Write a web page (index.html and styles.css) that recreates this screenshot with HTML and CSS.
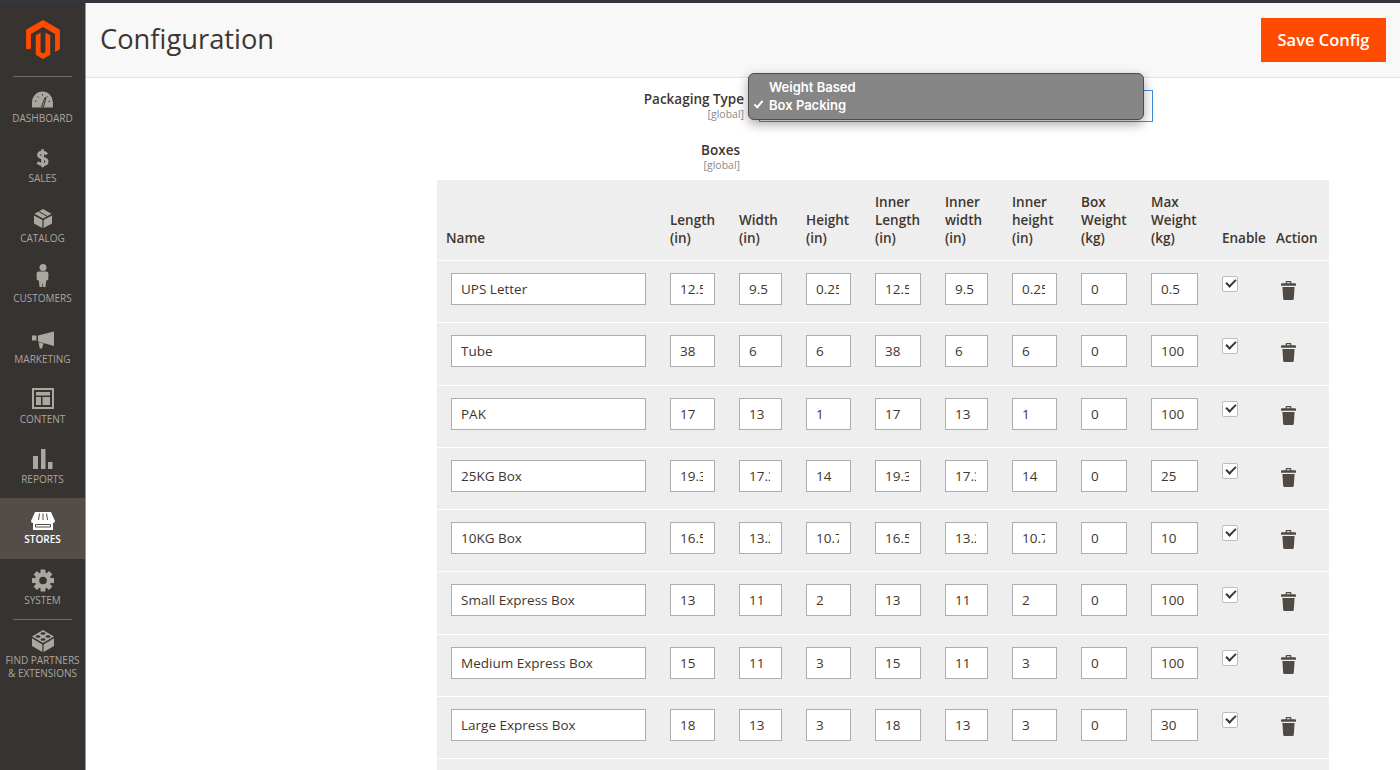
FILE: index.html
```html
<!DOCTYPE html>
<html lang="en">
<head>
    <meta charset="UTF-8">
    <meta name="viewport" content="width=device-width, initial-scale=1.0">
    <title>Configuration</title>
    <link rel="stylesheet" href="styles.css">
</head>
<body>
    <svg class="sprites" width="0" height="0">
        <symbol id="trash" viewBox="0 0 15 19">
            <path d="M4.6 2.2V1q0-1 1-1h3.800q1 0 1 1v1.200H14q1 0 1 1v1.600H0V3.200q0-1 1-1zM5.800 2.200h3.400V1.200H5.800z"/>
            <path d="M1.400 6h12.200l-.8 11.800q-.1 1.200-1.200 1.200H3.400q-1.100 0-1.200-1.200z"/>
        </symbol>
    </svg>

    <div class="topline"></div>
    <div class="layout">
        <nav class="sidebar">
            <div class="logo">
                <svg width="34" height="39" viewBox="1.6 0 20.8 24"><path d="M12 24l-4.455-2.572v-12l2.97-1.715v12.001l1.485.902 1.485-.902V7.713l2.97 1.715v12L12 24zM22.391 6v12l-2.969 1.714V8.572L12 4.286 4.574 8.572v9.143L1.609 18V6L12 0l10.391 6z"/></svg>
            </div>
            <a class="nav-item">
                <svg class="nav-icon" viewBox="0 0 26 26">
                    <path d="M2 21.500v-5a10.500 11 0 0 1 21 0v5z"/>
                    <path class="cut" d="M11.500 20.500l3.500-9 .8.3-2.200 9.200zM5 15l1.500.5M7.500 10.500l1.200 1M12.500 8v1.500M17.500 10.500l-1.200 1M20 15l-1.500.5"/>
                </svg>
                <span>Dashboard</span>
            </a>
            <a class="nav-item">
                <svg class="nav-icon" viewBox="0 0 26 26">
                    <path d="M11.200 3.200H14v18h-2.800z"/>
                    <path class="line" d="M17 8.200C15.500 6.700 14 6.200 12.500 6.200 10 6.200 8.600 7.400 8.600 9.100 8.600 13.500 17 11 17 15.400 17 17.300 15.300 18.400 12.800 18.400 10.800 18.400 9 17.900 7.500 16.400"/>
                </svg>
                <span>Sales</span>
            </a>
            <a class="nav-item">
                <svg class="nav-icon" viewBox="0 0 26 26">
                    <path d="M4.500 7.800L13 3l8.500 4.800L13 12.500z"/>
                    <path d="M4 9.400l8.400 4.700V22L4 17.400zM22 9.400l-8.400 4.700V22L22 17.400z"/>
                    <path class="cut" d="M8.500 5.400l8.500 4.800"/>
                </svg>
                <span>Catalog</span>
            </a>
            <a class="nav-item">
                <svg class="nav-icon" viewBox="0 0 26 26">
                    <circle cx="13" cy="1.500" r="3.500"/>
                    <path d="M9.500 5.500h7q2 0 2 2.500l-.3 6-2 .5-.7 6.500h-2.500l-.5-5-.5 5H9.500l-.7-6.500-2-.5-.3-6q0-2.500 2-2.500z"/>
                </svg>
                <span>Customers</span>
            </a>
            <a class="nav-item">
                <svg class="nav-icon" viewBox="0 0 26 26">
                    <path d="M8 8.500L24 4.500V19L8 14.500zM2 8.500h4.500v5H2zM8.500 15.200l5 1.400-1.500 4.900H9.800z"/>
                </svg>
                <span>Marketing</span>
            </a>
            <a class="nav-item">
                <svg class="nav-icon" viewBox="0 0 26 26">
                    <path fill-rule="evenodd" d="M2 1h22v21H2zM4 3v17h18V3z"/>
                    <path d="M6 5h14v3.500H6zM6 10h5v8H6zM12.500 10H20v8h-7.500z"/>
                </svg>
                <span>Content</span>
            </a>
            <a class="nav-item">
                <svg class="nav-icon" viewBox="0 0 26 26">
                    <path d="M3 9h5v13H3zM11 2h4.500v20H11zM18 15h4.500v7H18z"/>
                </svg>
                <span>Reports</span>
            </a>
            <a class="nav-item active">
                <svg class="nav-icon" viewBox="0 0 26 26">
                    <path d="M5 5h16l4 9q0 2-2 2v7H3v-7q-2 0-2-2z"/>
                    <path class="cut" d="M9.500 6.500L8.500 13M13 6.500V13M16.500 6.500l1 6.500M5.500 17.500h15v2.500h-15z"/>
                </svg>
                <span>Stores</span>
            </a>
            <a class="nav-item">
                <svg class="nav-icon" viewBox="0 0 26 26">
                    <rect x="10.500" y="1.500" width="5" height="22" rx=".5"/>
                    <rect x="10.500" y="1.500" width="5" height="22" rx=".5" transform="rotate(45 13 12.500)"/>
                    <rect x="10.500" y="1.500" width="5" height="22" rx=".5" transform="rotate(90 13 12.500)"/>
                    <rect x="10.500" y="1.500" width="5" height="22" rx=".5" transform="rotate(135 13 12.500)"/>
                    <circle cx="13" cy="12.500" r="8"/>
                    <circle class="hole" cx="13" cy="12.500" r="3.800"/>
                </svg>
                <span>System</span>
            </a>
            <div class="nav-line"></div>
            <a class="nav-item partners">
                <svg class="nav-icon" viewBox="0 0 26 26">
                    <path d="M13 0l11 6.500L13 13 2 6.500z"/>
                    <path d="M2 8.200l10.400 6.200V22L2 16zM24 8.200l-10.400 6.200V22L24 16z"/>
                    <ellipse class="hole" cx="13" cy="3.500" rx="2.500" ry="1.300"/>
                    <ellipse class="hole" cx="8" cy="6.500" rx="2.500" ry="1.300"/>
                    <ellipse class="hole" cx="18" cy="6.500" rx="2.500" ry="1.300"/>
                    <ellipse class="hole" cx="13" cy="9.500" rx="2.500" ry="1.300"/>
                </svg>
                <span>Find Partners<br>&amp; Extensions</span>
            </a>
        </nav>

        <div class="page">
            <header class="page-header">
                <h1>Configuration</h1>
                <button class="save-btn">Save Config</button>
            </header>

            <main class="config">
                <div class="field">
                    <div class="field-label">
                        <strong>Packaging Type</strong>
                        <small>[global]</small>
                    </div>
                    <div class="select-box">
                        <div class="select-menu">
                            <div class="select-option">Weight Based</div>
                            <div class="select-option checked">Box Packing</div>
                        </div>
                    </div>
                </div>

                <div class="field-label boxes-label">
                    <strong>Boxes</strong>
                    <small>[global]</small>
                </div>

                <table class="boxes">
                    <colgroup>
                        <col class="c-name"><col class="c-len"><col class="c-wid"><col class="c-hei">
                        <col class="c-ilen"><col class="c-iwid"><col class="c-ihei"><col class="c-bw">
                        <col class="c-mw"><col class="c-en"><col class="c-act">
                    </colgroup>
                    <thead>
                        <tr>
                            <th class="name-col">Name</th>
                            <th>Length (in)</th>
                            <th>Width (in)</th>
                            <th>Height (in)</th>
                            <th>Inner Length (in)</th>
                            <th>Inner width (in)</th>
                            <th>Inner height (in)</th>
                            <th>Box Weight (kg)</th>
                            <th>Max Weight (kg)</th>
                            <th>Enable</th>
                            <th>Action</th>
                        </tr>
                    </thead>
                    <tbody>
                        <tr>
                            <td class="name-col"><input type="text" value="UPS Letter"></td>
                            <td><input type="text" value="12.5"></td>
                            <td><input type="text" value="9.5"></td>
                            <td><input type="text" value="0.25"></td>
                            <td><input type="text" value="12.5"></td>
                            <td><input type="text" value="9.5"></td>
                            <td><input type="text" value="0.25"></td>
                            <td><input type="text" value="0"></td>
                            <td><input type="text" value="0.5"></td>
                            <td><input type="checkbox" checked></td>
                            <td><svg class="trash"><use href="#trash"/></svg></td>
                        </tr>
                        <tr>
                            <td class="name-col"><input type="text" value="Tube"></td>
                            <td><input type="text" value="38"></td>
                            <td><input type="text" value="6"></td>
                            <td><input type="text" value="6"></td>
                            <td><input type="text" value="38"></td>
                            <td><input type="text" value="6"></td>
                            <td><input type="text" value="6"></td>
                            <td><input type="text" value="0"></td>
                            <td><input type="text" value="100"></td>
                            <td><input type="checkbox" checked></td>
                            <td><svg class="trash"><use href="#trash"/></svg></td>
                        </tr>
                        <tr>
                            <td class="name-col"><input type="text" value="PAK"></td>
                            <td><input type="text" value="17"></td>
                            <td><input type="text" value="13"></td>
                            <td><input type="text" value="1"></td>
                            <td><input type="text" value="17"></td>
                            <td><input type="text" value="13"></td>
                            <td><input type="text" value="1"></td>
                            <td><input type="text" value="0"></td>
                            <td><input type="text" value="100"></td>
                            <td><input type="checkbox" checked></td>
                            <td><svg class="trash"><use href="#trash"/></svg></td>
                        </tr>
                        <tr>
                            <td class="name-col"><input type="text" value="25KG Box"></td>
                            <td><input type="text" value="19.3"></td>
                            <td><input type="text" value="17.3"></td>
                            <td><input type="text" value="14"></td>
                            <td><input type="text" value="19.3"></td>
                            <td><input type="text" value="17.3"></td>
                            <td><input type="text" value="14"></td>
                            <td><input type="text" value="0"></td>
                            <td><input type="text" value="25"></td>
                            <td><input type="checkbox" checked></td>
                            <td><svg class="trash"><use href="#trash"/></svg></td>
                        </tr>
                        <tr>
                            <td class="name-col"><input type="text" value="10KG Box"></td>
                            <td><input type="text" value="16.5"></td>
                            <td><input type="text" value="13.2"></td>
                            <td><input type="text" value="10.7"></td>
                            <td><input type="text" value="16.5"></td>
                            <td><input type="text" value="13.2"></td>
                            <td><input type="text" value="10.7"></td>
                            <td><input type="text" value="0"></td>
                            <td><input type="text" value="10"></td>
                            <td><input type="checkbox" checked></td>
                            <td><svg class="trash"><use href="#trash"/></svg></td>
                        </tr>
                        <tr>
                            <td class="name-col"><input type="text" value="Small Express Box"></td>
                            <td><input type="text" value="13"></td>
                            <td><input type="text" value="11"></td>
                            <td><input type="text" value="2"></td>
                            <td><input type="text" value="13"></td>
                            <td><input type="text" value="11"></td>
                            <td><input type="text" value="2"></td>
                            <td><input type="text" value="0"></td>
                            <td><input type="text" value="100"></td>
                            <td><input type="checkbox" checked></td>
                            <td><svg class="trash"><use href="#trash"/></svg></td>
                        </tr>
                        <tr>
                            <td class="name-col"><input type="text" value="Medium Express Box"></td>
                            <td><input type="text" value="15"></td>
                            <td><input type="text" value="11"></td>
                            <td><input type="text" value="3"></td>
                            <td><input type="text" value="15"></td>
                            <td><input type="text" value="11"></td>
                            <td><input type="text" value="3"></td>
                            <td><input type="text" value="0"></td>
                            <td><input type="text" value="100"></td>
                            <td><input type="checkbox" checked></td>
                            <td><svg class="trash"><use href="#trash"/></svg></td>
                        </tr>
                        <tr>
                            <td class="name-col"><input type="text" value="Large Express Box"></td>
                            <td><input type="text" value="18"></td>
                            <td><input type="text" value="13"></td>
                            <td><input type="text" value="3"></td>
                            <td><input type="text" value="18"></td>
                            <td><input type="text" value="13"></td>
                            <td><input type="text" value="3"></td>
                            <td><input type="text" value="0"></td>
                            <td><input type="text" value="30"></td>
                            <td><input type="checkbox" checked></td>
                            <td><svg class="trash"><use href="#trash"/></svg></td>
                        </tr>
                        <tr><td colspan="11"></td></tr>
                    </tbody>
                </table>
            </main>
        </div>
    </div>
</body>
</html>
```

FILE: styles.css
```css
/* Base */
html, body {
    margin: 0;
    height: 770px;
    overflow: hidden;
}
body {
    font-family: "Open Sans", sans-serif;
    font-size: 13.5px;
    color: #41362f;
    background-color: #fff;
}
.sprites {
    position: absolute;
}
.topline {
    height: 3px;
    background-color: #33363a;
}
.layout {
    display: flex;
    height: 767px;
}

/* Left menu */
.sidebar {
    flex: 0 0 86px;
    box-sizing: border-box;
    background-color: #373330;
    border-right: 1px solid #9a9794;
    color: #aaa6a0;
}
.logo {
    margin: 0 13px;
    height: 73.5px;
    box-sizing: border-box;
    padding-top: 17px;
    text-align: center;
    border-bottom: 1px solid #736e69;
}
.logo svg {
    fill: #ff4b00;
}
.nav-item {
    display: block;
    height: 60.25px;
    box-sizing: border-box;
    padding-top: 9px;
    text-align: center;
    font-size: 10px;
    line-height: 13px;
    text-transform: uppercase;
}
.nav-icon {
    display: block;
    width: 26px;
    height: 26px;
    margin: 0 auto;
    overflow: visible;
    fill: #aaa6a0;
}
.nav-icon .cut {
    fill: none;
    stroke: #373330;
    stroke-width: 1;
}
.nav-icon .line {
    fill: none;
    stroke: #aaa6a0;
    stroke-width: 3;
}
.nav-icon .hole {
    fill: #373330;
}
.nav-item.active {
    background-color: #524d49;
    color: #fff;
    font-weight: 600;
}
.nav-item.active .nav-icon {
    fill: #fff;
}
.nav-item.active .cut {
    stroke: #524d49;
}
.nav-line {
    height: 1px;
    margin: 0 13px;
    background-color: #736e69;
}
.partners {
    height: auto;
    padding-top: 10px;
}
.partners span {
    display: block;
    margin-top: -2px;
}

/* Header */
.page {
    flex: 1;
    min-width: 0;
}
.page-header {
    display: flex;
    justify-content: space-between;
    align-items: center;
    height: 75px;
    box-sizing: border-box;
    padding: 0 14px;
    background-color: #f8f8f8;
    border-bottom: 1px solid #e3e3e3;
}
.page-header h1 {
    margin: -3px 0 0;
    font-size: 27.3px;
    font-weight: 400;
    color: #41362f;
}
.save-btn {
    width: 125px;
    height: 44px;
    padding: 0 0 2px;
    border: 0;
    background-color: #ff4b00;
    color: #fff;
    font-family: inherit;
    font-size: 16.5px;
    font-weight: 600;
}

/* Form */
.config {
    padding: 12px 0 0 351px;
}
.field {
    display: flex;
    height: 32px;
}
.field-label {
    width: 307px;
    text-align: right;
    line-height: 18px;
}
.field-label strong {
    display: block;
    font-weight: 600;
}
.field-label small {
    display: block;
    font-size: 10.5px;
    line-height: 12px;
    color: #8a8a8a;
}
.boxes-label {
    width: 303px;
    margin-top: 19px;
}
.select-box {
    position: relative;
    box-sizing: border-box;
    width: 394px;
    height: 32px;
    margin-left: 15px;
    border: 1px solid #3f8fe0;
}
.select-menu {
    position: absolute;
    top: -18px;
    left: -12px;
    box-sizing: border-box;
    width: 396px;
    height: 47px;
    padding-top: 4px;
    background-color: #868686;
    border: 1px solid #4c4c4c;
    border-radius: 6px;
    box-shadow: 0 4px 12px rgba(0, 0, 0, .35);
    color: #fff;
    font-family: Inter, sans-serif;
    font-size: 13px;
    font-weight: 600;
    line-height: 18px;
}
.select-option {
    padding-left: 20px;
}
.select-option.checked {
    position: relative;
}
.select-option.checked::before {
    content: "";
    position: absolute;
    left: 5px;
    top: 5px;
    width: 7px;
    height: 3px;
    border-left: 2px solid #fff;
    border-bottom: 2px solid #fff;
    transform: rotate(-50deg);
}

/* Boxes table */
.boxes {
    width: 892px;
    margin-top: 9px;
    table-layout: fixed;
    border-collapse: separate;
    border-spacing: 0;
    background-color: #eeeeee;
}
.c-name { width: 223px; }
.c-len { width: 69px; }
.c-wid { width: 67px; }
.c-hei { width: 69px; }
.c-ilen { width: 70px; }
.c-iwid { width: 67px; }
.c-ihei { width: 69px; }
.c-bw { width: 70px; }
.c-mw { width: 71px; }
.c-en { width: 54px; }
.c-act { width: 63px; }
.boxes th {
    height: 80px;
    box-sizing: border-box;
    padding: 0 10px 13px 10px;
    vertical-align: bottom;
    text-align: left;
    font-weight: 600;
    line-height: 18px;
}
.boxes th.name-col {
    padding-left: 9px;
}
.boxes td {
    height: 62.25px;
    box-sizing: border-box;
    padding: 12px 14px 0 10px;
    vertical-align: top;
    border-top: 1px solid #fff;
}
.boxes td.name-col {
    padding-left: 14px;
}
.boxes input[type="text"] {
    display: block;
    box-sizing: border-box;
    width: 100%;
    height: 32px;
    margin: 0;
    padding: 0 11px 0 9px;
    border: 1px solid #adadad;
    border-radius: 0;
    background-color: #fff;
    color: #41362f;
    font-family: inherit;
    font-size: 13.5px;
}
.boxes input[type="checkbox"] {
    appearance: none;
    position: relative;
    display: block;
    box-sizing: border-box;
    width: 16px;
    height: 16px;
    margin: 3px 0 0;
    border: 1px solid #bdbdbd;
    border-radius: 2px;
    background-color: #fff;
}
.boxes input[type="checkbox"]::after {
    content: "";
    position: absolute;
    left: 3px;
    top: 2px;
    width: 8px;
    height: 4px;
    border-left: 2px solid #41362f;
    border-bottom: 2px solid #41362f;
    transform: rotate(-45deg);
}
.trash {
    display: block;
    width: 15px;
    height: 19px;
    margin: 8px 0 0 5px;
    fill: #514943;
}
```
